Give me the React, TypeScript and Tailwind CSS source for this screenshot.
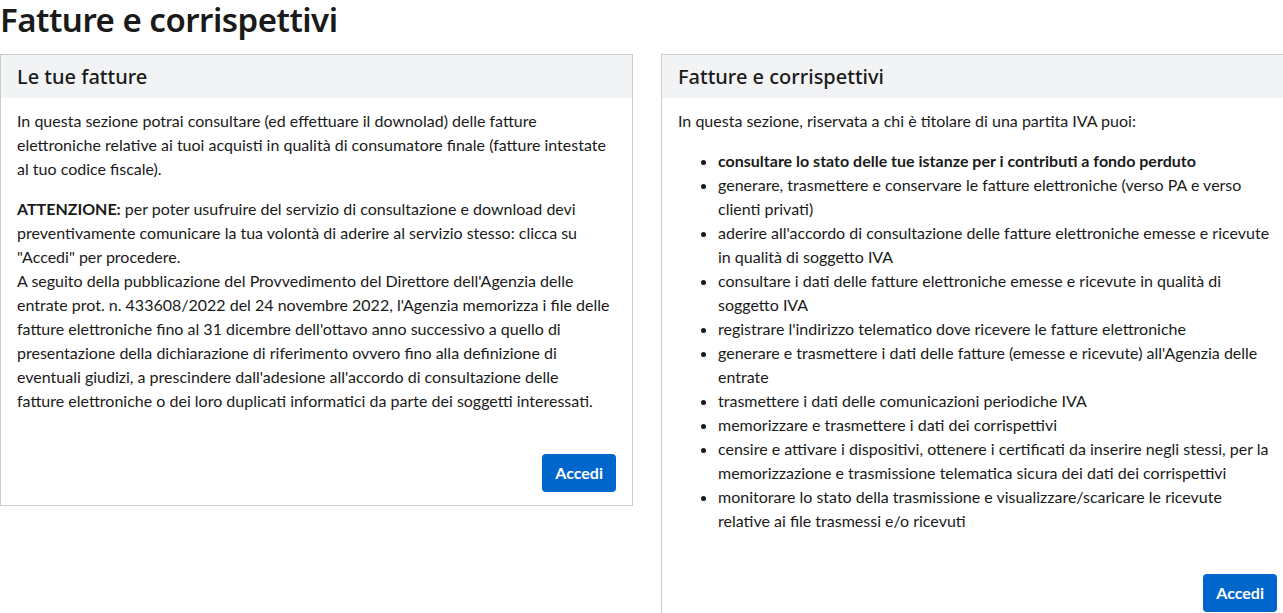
const items: { text: string; bold?: boolean }[] = [
  { text: 'consultare lo stato delle tue istanze per i contributi a fondo perduto', bold: true },
  { text: 'generare, trasmettere e conservare le fatture elettroniche (verso PA e verso clienti privati)' },
  { text: "aderire all'accordo di consultazione delle fatture elettroniche emesse e ricevute in qualità di soggetto IVA" },
  { text: 'consultare i dati delle fatture elettroniche emesse e ricevute in qualità di soggetto IVA' },
  { text: "registrare l'indirizzo telematico dove ricevere le fatture elettroniche" },
  { text: "generare e trasmettere i dati delle fatture (emesse e ricevute) all'Agenzia delle entrate" },
  { text: 'trasmettere i dati delle comunicazioni periodiche IVA' },
  { text: 'memorizzare e trasmettere i dati dei corrispettivi' },
  { text: 'censire e attivare i dispositivi, ottenere i certificati da inserire negli stessi, per la memorizzazione e trasmissione telematica sicura dei dati dei corrispettivi' },
  { text: 'monitorare lo stato della trasmissione e visualizzare/scaricare le ricevute relative ai file trasmessi e/o ricevuti' },
]

function AccediButton() {
  return (
    <div className="flex justify-end">
      <button className="h-[38px] px-[13px] rounded bg-[#0066cc] text-white font-bold text-[16px]">
        Accedi
      </button>
    </div>
  )
}

function Card({ title, children }: { title: string; children: React.ReactNode }) {
  return (
    <div className="w-[633px] shrink-0 border border-[#cccccc] bg-white flex flex-col">
      <div className="h-[43px] bg-[#f2f3f5] px-[16px] flex items-center">
        <h2 className="text-[20px] font-medium text-[#1a1a1a] [font-family:'Noto_Sans',sans-serif]">{title}</h2>
      </div>
      <div className="px-[16px] pt-[11px] pb-[13px] flex flex-col grow">{children}</div>
    </div>
  )
}

export default function App() {
  return (
    <div className="w-[1283px] h-[613px] overflow-hidden bg-white text-[#1a1a1a] [font-family:Lato,sans-serif]">
      <div className="w-[1294px]">
        <h1 className="text-[33px] leading-[40px] font-semibold text-[#1a1a1a] pb-[14px] [font-family:'Noto_Sans',sans-serif] tracking-[-0.5px]">
          Fatture e corrispettivi
        </h1>
        <div className="flex items-start gap-[28px]">
          <Card title="Le tue fatture">
            <div className="text-[16px] leading-[24px]">
              <p className="mb-[16px]">
                In questa sezione potrai consultare (ed effettuare il downolad) delle fatture elettroniche relative ai
                tuoi acquisti in qualità di consumatore finale (fatture intestate al tuo codice fiscale).
              </p>
              <p>
                <b>ATTENZIONE:</b> per poter usufruire del servizio di consultazione e download devi preventivamente
                comunicare la tua volontà di aderire al servizio stesso: clicca su "Accedi" per procedere.
                <br />
                A seguito della pubblicazione del Provvedimento del Direttore dell'Agenzia delle entrate prot. n.
                433608/2022 del 24 novembre 2022, l'Agenzia memorizza i file delle fatture elettroniche fino al 31
                dicembre dell'ottavo anno successivo a quello di presentazione della dichiarazione di riferimento ovvero
                fino alla definizione di eventuali giudizi, a prescindere dall'adesione all'accordo di consultazione
                delle fatture{'\u00a0'}elettroniche o dei loro duplicati informatici da parte dei soggetti interessati.
              </p>
            </div>
            <div className="mt-[41px]">
              <AccediButton />
            </div>
          </Card>
          <Card title="Fatture e corrispettivi">
            <div className="text-[16px] leading-[24px]">
              <p className="mb-[16px]">In questa sezione, riservata a chi è titolare di una partita IVA puoi:</p>
              <ul className="list-disc pl-[40px]">
                {items.map((it) => (
                  <li key={it.text} className={it.bold ? 'font-bold' : ''}>
                    {it.text}
                  </li>
                ))}
              </ul>
            </div>
            <div className="mt-[41px]">
              <AccediButton />
            </div>
          </Card>
        </div>
      </div>
    </div>
  )
}
